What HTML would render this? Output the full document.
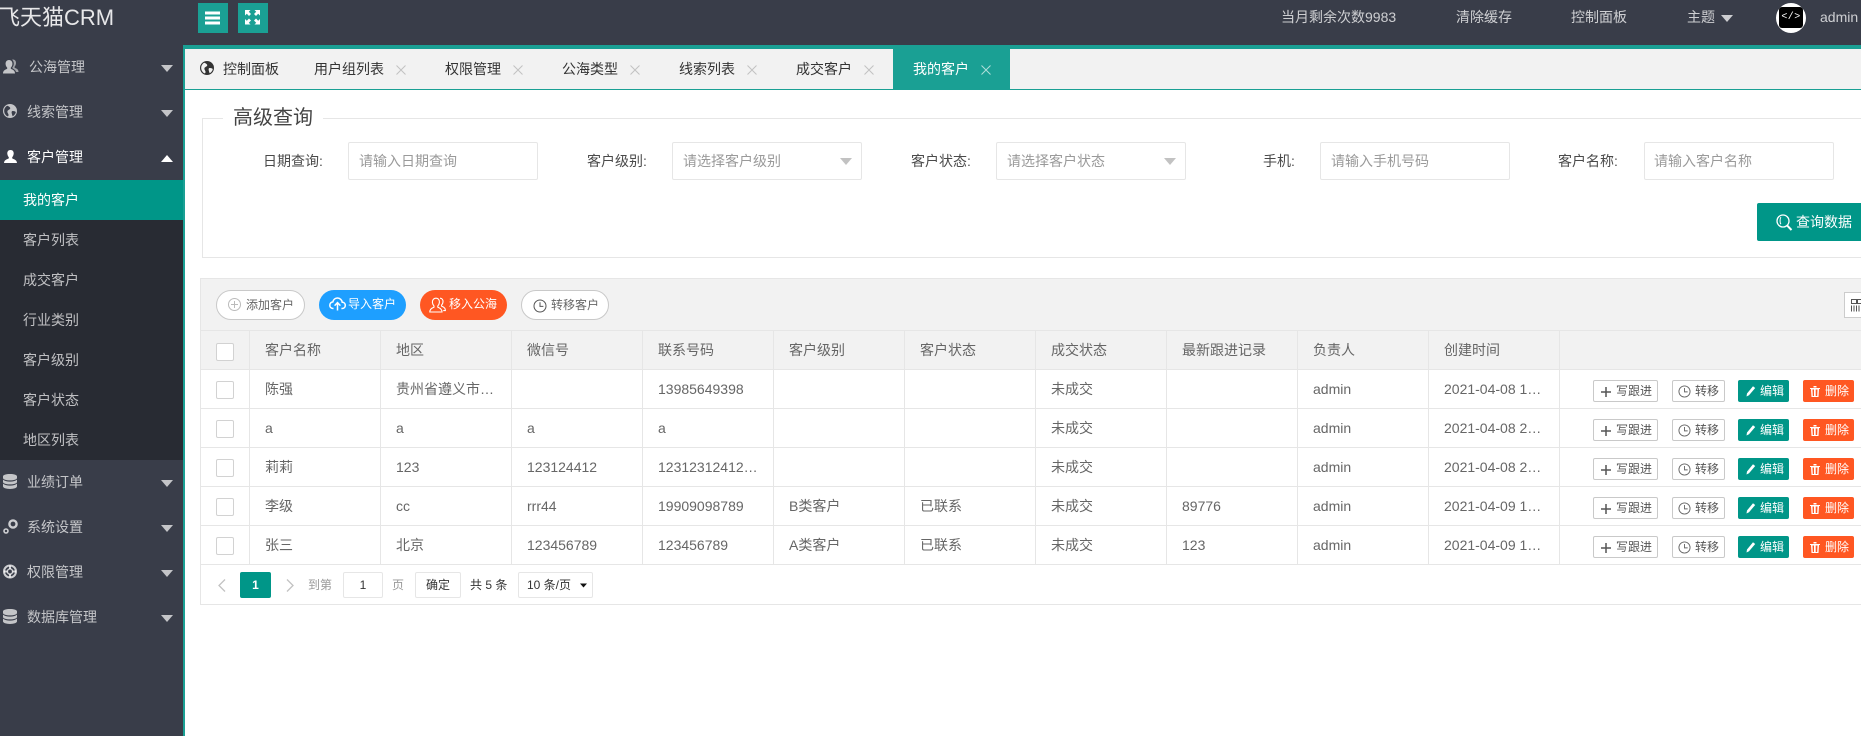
<!DOCTYPE html>
<html lang="zh-CN">
<head>
<meta charset="utf-8">
<title>飞天猫CRM</title>
<style>
*{box-sizing:border-box}
html,body{margin:0;padding:0;width:1861px;height:736px;overflow:hidden;background:#fff}
body{position:relative;font-family:"Liberation Sans","Noto Sans CJK SC",sans-serif;font-size:14px;color:#666}
.a{position:absolute}
.t{position:absolute;white-space:nowrap;line-height:20px;height:20px}
svg{position:absolute;display:block;overflow:visible}
.s{color:rgba(255,255,255,.7)}
.c{color:rgba(255,255,255,.75)}
.tb{color:#333}
.lb{color:#4a4a4a}
.ph{color:#9a9a9a}
.in{position:absolute;top:142px;width:190px;height:38px;border:1px solid #e6e6e6;border-radius:2px;background:#fff}
.pill{position:absolute;top:290px;height:30px;border-radius:15px;font-size:12px;line-height:28px}
table{position:absolute;left:200px;top:331px;border-collapse:separate;border-spacing:0;table-layout:fixed;width:1661px}
td{height:39px;padding:0 15px;border-right:1px solid #e6e6e6;border-bottom:1px solid #e6e6e6;white-space:nowrap;overflow:hidden;position:relative;font-size:14px;color:#666;line-height:20px}
td:first-child{border-left:1px solid #e6e6e6}
td:last-child{border-right:0}
thead td{background:#f2f2f2}
.cb{position:absolute;left:15px;top:11px;width:18px;height:18px;border:1px solid #d2d2d2;border-radius:2px;background:#fff}
.b{position:absolute;top:10px;height:22px;font-size:12px;line-height:20px;border-radius:2px;white-space:nowrap}
.b span{position:absolute;top:0}
.b svg{top:0;left:0}
.w{background:#fff;border:1px solid #c9c9c9;color:#555}
.g{background:#009688;color:#fff;line-height:22px}
.r{background:#ff5722;color:#fff;line-height:22px}
.pg{position:absolute;top:572px;height:26px;border:1px solid #e6e6e6;border-radius:2px;background:#fff;font-size:12px;line-height:24px;color:#333}
</style>
</head>
<body>
<svg width="0" height="0" style="position:absolute">
<defs>
<symbol id="clock" viewBox="0 0 14 14"><circle cx="7" cy="7" r="6" fill="none" stroke="currentColor" stroke-width="1"/><path d="M7 3.2V7.4H10.4" fill="none" stroke="currentColor" stroke-width="1"/></symbol>
<symbol id="plus" viewBox="0 0 10 10"><path d="M5 0V10M0 5H10" stroke="currentColor" stroke-width="1.5" fill="none"/></symbol>
<symbol id="pen" viewBox="0 0 10 12"><path d="M0.5 11.5L1 8.5 7 1.2 9.2 3 3 10.2Z" fill="#fff"/></symbol>
<symbol id="trash" viewBox="0 0 10 11"><path d="M0 2H10V3H9L8.5 11H1.5L1 3H0ZM3.5 0H6.5V1.5H3.5ZM2.5 3.5L2.8 10H4V3.5ZM5.7 3.5V10H7.2L7.5 3.5Z" fill="#fff" fill-rule="evenodd"/></symbol>
<symbol id="x" viewBox="0 0 10 10"><path d="M0.5 0.5L9.5 9.5M9.5 0.5L0.5 9.5" stroke="currentColor" stroke-width="1" fill="none"/></symbol>
<symbol id="db" viewBox="0 0 14 15"><path d="M7 0C10.9 0 14 1 14 2.4V4C14 5.4 10.9 6.4 7 6.4S0 5.4 0 4V2.4C0 1 3.1 0 7 0ZM0 5.6C1.5 6.9 4 7.6 7 7.6S12.5 6.9 14 5.6V8C14 9.4 10.9 10.4 7 10.4S0 9.4 0 8ZM0 9.6C1.5 10.9 4 11.6 7 11.6S12.5 10.9 14 9.6V12.4C14 13.9 10.9 15 7 15S0 13.9 0 12.4Z" fill="currentColor"/></symbol>
<symbol id="dn" viewBox="0 0 12 7"><path d="M0 0H12L6 7Z" fill="currentColor"/></symbol>
<symbol id="globe" viewBox="0 0 14 14"><path fill-rule="evenodd" d="M7 0A7 7 0 1 1 7 14 7 7 0 1 1 7 0ZM4.2 1.8C2.4 2.8 1.2 4.7 1.2 7S2.6 11.4 4.6 12.4C5.4 12 5.8 11.2 5.4 10.2 5 9.2 4.2 8.4 4.4 7.2 4.6 6 6.6 5.8 7.2 4.6 7.6 3.6 6 2.4 4.2 1.8ZM9 7.2C8.4 7.8 8.6 9 9 10.2 9.2 11 9.4 11.8 9.8 12.2 11.4 11.2 12.6 9.6 12.8 8 12 7.2 10 6.6 9 7.2Z" fill="currentColor"/></symbol>
</defs>
</svg>

<!-- header -->
<div class="a" style="left:0;top:0;width:1861px;height:45px;background:#393d49"></div>
<div class="a" style="left:0;top:45px;width:183px;height:691px;background:#393d49"></div>
<div class="a" style="left:183px;top:45px;width:2px;height:691px;background:#1aa094"></div>
<div class="a" style="left:183px;top:45px;width:1678px;height:4px;background:#1aa094"></div>
<div class="t" style="left:-2px;top:6px;height:24px;line-height:24px;font-size:22px;color:rgba(255,255,255,.88)">飞天猫CRM</div>

<div class="a" style="left:198px;top:3px;width:30px;height:30px;background:#1aa094"></div>
<svg style="left:205px;top:11px" width="16" height="14"><path d="M0 0.5H15V3.5H0ZM0 5.5H15V8.5H0ZM0 10.5H15V13.5H0Z" fill="#fff"/></svg>
<div class="a" style="left:238px;top:3px;width:30px;height:30px;background:#1aa094"></div>
<svg style="left:245px;top:10px" width="16" height="15"><path d="M0 0H5.5L3.8 1.8 6 4 4 6 1.8 3.8 0 5.5ZM15 0V5.5L13.2 3.8 11 6 9 4 11.2 1.8 9.5 0ZM0 14.5V9L1.8 10.7 4 8.5 6 10.5 3.8 12.7 5.5 14.5ZM15 14.5H9.5L11.2 12.7 9 10.5 11 8.5 13.2 10.7 15 9Z" fill="#fff"/></svg>

<div class="t c" style="left:1281px;top:7px">当月剩余次数9983</div>
<div class="t c" style="left:1456px;top:7px">清除缓存</div>
<div class="t c" style="left:1571px;top:7px">控制面板</div>
<div class="t c" style="left:1687px;top:7px">主题</div>
<svg style="left:1721px;top:15px;color:rgba(255,255,255,.75)" width="12" height="7"><use href="#dn"/></svg>
<div class="a" style="left:1776px;top:3px;width:30px;height:30px;border-radius:50%;background:#fff"></div>
<div class="a" style="left:1779px;top:7px;width:24px;height:21px;background:#000;border-radius:3px;color:#fff;font:10px/21px 'Liberation Mono',monospace;text-align:center;letter-spacing:.4px">&lt;/&gt;</div>
<div class="t c" style="left:1820px;top:7px">admin</div>

<!-- sidebar -->
<svg style="left:3px;top:59px;color:rgba(255,255,255,.7)" width="16" height="15"><path d="M6 1C8.4 1 9.6 3 9.4 5.2 9.2 7 8.4 8 7.8 8.6V9.8C9 10.6 12 11 12 14.5H0C0 11 3 10.6 4.2 9.8V8.6C3.6 8 2.8 7 2.6 5.2 2.4 3 3.6 1 6 1Z" fill="currentColor"/><path d="M10 0.5C12.2 0.5 13.2 2.4 13 4.4 12.8 6 12.2 7 11.6 7.6V8.8C12.6 9.4 15.5 9.8 15.5 13H13C12.6 10.8 10.6 10 9.4 9.2V8.4C10.4 7.2 10.8 6 10.8 4.6 10.8 3 10.2 1.5 9 .8Z" fill="currentColor" opacity=".75"/></svg>
<div class="t s" style="left:29px;top:57px">公海管理</div>
<svg style="left:161px;top:65px;color:rgba(255,255,255,.7)" width="12" height="7"><use href="#dn"/></svg>

<svg style="left:3px;top:104px;color:rgba(255,255,255,.7)" width="14" height="14"><use href="#globe"/></svg>
<div class="t s" style="left:27px;top:102px">线索管理</div>
<svg style="left:161px;top:110px;color:rgba(255,255,255,.7)" width="12" height="7"><use href="#dn"/></svg>

<svg style="left:4px;top:150px" width="13" height="13"><path d="M6.5 0C8.8 0 9.9 1.8 9.7 3.8 9.5 5.5 8.8 6.6 8.2 7.2V8.4C9.4 9.2 12.8 9.6 13 13H0C.2 9.6 3.6 9.2 4.8 8.4V7.2C4.2 6.6 3.5 5.5 3.3 3.8 3.1 1.8 4.2 0 6.5 0Z" fill="#fff"/></svg>
<div class="t" style="left:27px;top:147px;color:#fff">客户管理</div>
<svg style="left:161px;top:155px" width="12" height="7"><path d="M0 7H12L6 0Z" fill="#fff"/></svg>

<div class="a" style="left:0;top:180px;width:183px;height:40px;background:#009688"></div>
<div class="a" style="left:0;top:220px;width:183px;height:240px;background:#282b33"></div>
<div class="t" style="left:23px;top:190px;color:#fff">我的客户</div>
<div class="t s" style="left:23px;top:230px">客户列表</div>
<div class="t s" style="left:23px;top:270px">成交客户</div>
<div class="t s" style="left:23px;top:310px">行业类别</div>
<div class="t s" style="left:23px;top:350px">客户级别</div>
<div class="t s" style="left:23px;top:390px">客户状态</div>
<div class="t s" style="left:23px;top:430px">地区列表</div>

<svg style="left:3px;top:474px;color:rgba(255,255,255,.7)" width="14" height="15"><use href="#db"/></svg>
<div class="t s" style="left:27px;top:472px">业绩订单</div>
<svg style="left:161px;top:480px;color:rgba(255,255,255,.7)" width="12" height="7"><use href="#dn"/></svg>

<svg style="left:3px;top:519px" width="15" height="15"><circle cx="10" cy="5" r="3.6" fill="none" stroke="rgba(255,255,255,.75)" stroke-width="2.4"/><circle cx="3" cy="12" r="2" fill="none" stroke="rgba(255,255,255,.75)" stroke-width="1.6"/></svg>
<div class="t s" style="left:27px;top:517px">系统设置</div>
<svg style="left:161px;top:525px;color:rgba(255,255,255,.7)" width="12" height="7"><use href="#dn"/></svg>

<svg style="left:3px;top:564px" width="14" height="15"><circle cx="7" cy="7.5" r="6" fill="none" stroke="rgba(255,255,255,.75)" stroke-width="2"/><circle cx="7" cy="7.5" r="2.6" fill="none" stroke="rgba(255,255,255,.75)" stroke-width="1.4"/><path d="M7 1.5V5M7 10V13.5M1 7.5H4.5M9.5 7.5H13" stroke="rgba(255,255,255,.75)" stroke-width="2" fill="none"/></svg>
<div class="t s" style="left:27px;top:562px">权限管理</div>
<svg style="left:161px;top:570px;color:rgba(255,255,255,.7)" width="12" height="7"><use href="#dn"/></svg>

<svg style="left:3px;top:609px;color:rgba(255,255,255,.7)" width="14" height="15"><use href="#db"/></svg>
<div class="t s" style="left:27px;top:607px">数据库管理</div>
<svg style="left:161px;top:615px;color:rgba(255,255,255,.7)" width="12" height="7"><use href="#dn"/></svg>

<!-- tabs -->
<div class="a" style="left:185px;top:49px;width:1676px;height:40px;background:#f2f2f2"></div>
<div class="a" style="left:185px;top:89px;width:1676px;height:1px;background:#1aa094"></div>
<svg style="left:200px;top:61px;color:#333" width="14" height="14"><use href="#globe"/></svg>
<div class="t tb" style="left:223px;top:59px">控制面板</div>
<div class="t tb" style="left:314px;top:59px">用户组列表</div>
<svg style="left:396px;top:65px;color:#c2c2c2" width="10" height="10"><use href="#x"/></svg>
<div class="t tb" style="left:445px;top:59px">权限管理</div>
<svg style="left:513px;top:65px;color:#c2c2c2" width="10" height="10"><use href="#x"/></svg>
<div class="t tb" style="left:562px;top:59px">公海类型</div>
<svg style="left:630px;top:65px;color:#c2c2c2" width="10" height="10"><use href="#x"/></svg>
<div class="t tb" style="left:679px;top:59px">线索列表</div>
<svg style="left:747px;top:65px;color:#c2c2c2" width="10" height="10"><use href="#x"/></svg>
<div class="t tb" style="left:796px;top:59px">成交客户</div>
<svg style="left:864px;top:65px;color:#c2c2c2" width="10" height="10"><use href="#x"/></svg>
<div class="a" style="left:893px;top:49px;width:117px;height:41px;background:#1aa094"></div>
<div class="t" style="left:913px;top:59px;color:#fff">我的客户</div>
<svg style="left:981px;top:65px;color:rgba(255,255,255,.65)" width="10" height="10"><use href="#x"/></svg>

<!-- search fieldset -->
<div class="a" style="left:202px;top:118px;width:1680px;height:140px;border:1px solid #e6e6e6"></div>
<div class="a" style="left:223px;top:104px;width:100px;height:28px;background:#fff"></div>
<div class="t" style="left:233px;top:104px;height:28px;line-height:28px;font-size:20px;color:#444">高级查询</div>

<div class="t lb" style="left:263px;top:151px">日期查询:</div>
<div class="in" style="left:348px"></div>
<div class="t ph" style="left:359px;top:151px">请输入日期查询</div>

<div class="t lb" style="left:587px;top:151px">客户级别:</div>
<div class="in" style="left:672px"></div>
<div class="t ph" style="left:683px;top:151px">请选择客户级别</div>
<svg style="left:840px;top:158px;color:#c2c2c2" width="12" height="7"><use href="#dn"/></svg>

<div class="t lb" style="left:911px;top:151px">客户状态:</div>
<div class="in" style="left:996px"></div>
<div class="t ph" style="left:1007px;top:151px">请选择客户状态</div>
<svg style="left:1164px;top:158px;color:#c2c2c2" width="12" height="7"><use href="#dn"/></svg>

<div class="t lb" style="left:1263px;top:151px">手机:</div>
<div class="in" style="left:1320px"></div>
<div class="t ph" style="left:1331px;top:151px">请输入手机号码</div>

<div class="t lb" style="left:1558px;top:151px">客户名称:</div>
<div class="in" style="left:1644px"></div>
<div class="t ph" style="left:1654px;top:151px">请输入客户名称</div>

<div class="a" style="left:1757px;top:203px;width:110px;height:38px;background:#009688;border-radius:2px"></div>
<svg style="left:1776px;top:214px" width="17" height="17"><circle cx="7" cy="7" r="6" fill="none" stroke="#fff" stroke-width="1.3"/><path d="M5 3.2C3.8 4.4 3.8 9 5 10.2" fill="none" stroke="#fff" stroke-width="1"/><path d="M11.2 11.6L15.5 16" stroke="#fff" stroke-width="2"/></svg>
<div class="t" style="left:1796px;top:212px;color:#fff">查询数据</div>

<!-- toolbar -->
<div class="a" style="left:200px;top:278px;width:1680px;height:53px;background:#f2f2f2;border:1px solid #e6e6e6"></div>

<div class="pill" style="left:216px;width:89px;background:#fff;border:1px solid #c9c9c9;color:#666"></div>
<svg style="left:228px;top:298px" width="13" height="13"><circle cx="6.5" cy="6.5" r="6" fill="none" stroke="#bbb"/><path d="M6.5 3V10M3 6.5H10" stroke="#bbb" fill="none"/></svg>
<div class="t" style="left:246px;top:295px;font-size:12px;color:#666">添加客户</div>

<div class="pill" style="left:319px;width:87px;background:#1e9fff"></div>
<svg style="left:329px;top:297px" width="17" height="14"><path d="M4.5 11.5H4C2 11.5 .8 10 .8 8.2S2.2 5 3.8 5C4.4 2.6 6.2 1 8.4 1 11 1 13 3 13.2 5.2 15 5.2 16.3 6.6 16.3 8.4S15 11.5 13 11.5H12.4" fill="none" stroke="#fff" stroke-width="1.5"/><path d="M8.5 13.5V6M5.6 8.6L8.5 5.6 11.4 8.6" fill="none" stroke="#fff" stroke-width="1.5"/></svg>
<div class="t" style="left:348px;top:294px;font-size:12px;color:#fff">导入客户</div>

<div class="pill" style="left:420px;width:87px;background:#ff5722"></div>
<svg style="left:429px;top:297px" width="17" height="16"><path d="M7 1.2C9.4 1.2 10.6 3.2 10.4 5.4 10.2 7.2 9.4 8.4 8.8 9V10.2C10 11 13 11.4 13 15H.8C.8 11.4 3.8 11 5 10.2V9C4.4 8.4 3.6 7.2 3.4 5.4 3.2 3.2 4.6 1.2 7 1.2Z" fill="none" stroke="#fff" stroke-width="1.1"/><path d="M11 1.2C13.2 1.2 14.2 3 14 5 13.8 6.6 13.2 7.4 12.6 8V9.2C13.6 9.8 16.4 10 16.4 13.6H14.2" fill="none" stroke="#fff" stroke-width="1.1"/></svg>
<div class="t" style="left:449px;top:294px;font-size:12px;color:#fff">移入公海</div>

<div class="pill" style="left:521px;width:88px;background:#fff;border:1px solid #c9c9c9"></div>
<svg style="left:533px;top:299px;color:#555" width="14" height="14"><use href="#clock"/></svg>
<div class="t" style="left:551px;top:295px;font-size:12px;color:#666">转移客户</div>

<div class="a" style="left:1844px;top:292px;width:30px;height:26px;border:1px solid #ccc;background:#fff"></div>
<svg style="left:1851px;top:299px" width="10" height="13"><path d="M.5 .5H5.5V4.5H.5ZM6.5 .5H12V4.5H6.5ZM.5 6.5V12.5M3 6.5V12.5M5.5 6.5V12.5M8 6.5V12.5" fill="none" stroke="#555" stroke-width="1"/></svg>

<!-- table -->
<table>
<colgroup><col style="width:50px"><col style="width:131px"><col style="width:131px"><col style="width:131px"><col style="width:131px"><col style="width:131px"><col style="width:131px"><col style="width:131px"><col style="width:131px"><col style="width:131px"><col style="width:131px"><col style="width:301px"></colgroup>
<thead><tr style="height:39px"><td><div class="cb" style="top:12px"></div></td><td>客户名称</td><td>地区</td><td>微信号</td><td>联系号码</td><td>客户级别</td><td>客户状态</td><td>成交状态</td><td>最新跟进记录</td><td>负责人</td><td>创建时间</td><td></td></tr></thead>
<tbody>
<tr><td><div class="cb"></div></td><td>陈强</td><td>贵州省遵义市…</td><td></td><td>13985649398</td><td></td><td></td><td>未成交</td><td></td><td>admin</td><td>2021-04-08 1…</td>
<td><div class="b w" style="left:33px;width:65px"><svg style="left:7px;top:6px;color:#555" width="10" height="10"><use href="#plus"/></svg><span style="left:22px">写跟进</span></div><div class="b w" style="left:112px;width:53px"><svg style="left:5px;top:4px;color:#666" width="13" height="13"><use href="#clock"/></svg><span style="left:22px">转移</span></div><div class="b g" style="left:178px;width:51px"><svg style="left:8px;top:5px" width="10" height="12"><use href="#pen"/></svg><span style="left:22px">编辑</span></div><div class="b r" style="left:243px;width:51px"><svg style="left:7px;top:6px" width="10" height="11"><use href="#trash"/></svg><span style="left:22px">删除</span></div></td></tr>
<tr><td><div class="cb"></div></td><td>a</td><td>a</td><td>a</td><td>a</td><td></td><td></td><td>未成交</td><td></td><td>admin</td><td>2021-04-08 2…</td>
<td><div class="b w" style="left:33px;width:65px"><svg style="left:7px;top:6px;color:#555" width="10" height="10"><use href="#plus"/></svg><span style="left:22px">写跟进</span></div><div class="b w" style="left:112px;width:53px"><svg style="left:5px;top:4px;color:#666" width="13" height="13"><use href="#clock"/></svg><span style="left:22px">转移</span></div><div class="b g" style="left:178px;width:51px"><svg style="left:8px;top:5px" width="10" height="12"><use href="#pen"/></svg><span style="left:22px">编辑</span></div><div class="b r" style="left:243px;width:51px"><svg style="left:7px;top:6px" width="10" height="11"><use href="#trash"/></svg><span style="left:22px">删除</span></div></td></tr>
<tr><td><div class="cb"></div></td><td>莉莉</td><td>123</td><td>123124412</td><td>12312312412…</td><td></td><td></td><td>未成交</td><td></td><td>admin</td><td>2021-04-08 2…</td>
<td><div class="b w" style="left:33px;width:65px"><svg style="left:7px;top:6px;color:#555" width="10" height="10"><use href="#plus"/></svg><span style="left:22px">写跟进</span></div><div class="b w" style="left:112px;width:53px"><svg style="left:5px;top:4px;color:#666" width="13" height="13"><use href="#clock"/></svg><span style="left:22px">转移</span></div><div class="b g" style="left:178px;width:51px"><svg style="left:8px;top:5px" width="10" height="12"><use href="#pen"/></svg><span style="left:22px">编辑</span></div><div class="b r" style="left:243px;width:51px"><svg style="left:7px;top:6px" width="10" height="11"><use href="#trash"/></svg><span style="left:22px">删除</span></div></td></tr>
<tr><td><div class="cb"></div></td><td>李级</td><td>cc</td><td>rrr44</td><td>19909098789</td><td>B类客户</td><td>已联系</td><td>未成交</td><td>89776</td><td>admin</td><td>2021-04-09 1…</td>
<td><div class="b w" style="left:33px;width:65px"><svg style="left:7px;top:6px;color:#555" width="10" height="10"><use href="#plus"/></svg><span style="left:22px">写跟进</span></div><div class="b w" style="left:112px;width:53px"><svg style="left:5px;top:4px;color:#666" width="13" height="13"><use href="#clock"/></svg><span style="left:22px">转移</span></div><div class="b g" style="left:178px;width:51px"><svg style="left:8px;top:5px" width="10" height="12"><use href="#pen"/></svg><span style="left:22px">编辑</span></div><div class="b r" style="left:243px;width:51px"><svg style="left:7px;top:6px" width="10" height="11"><use href="#trash"/></svg><span style="left:22px">删除</span></div></td></tr>
<tr><td><div class="cb"></div></td><td>张三</td><td>北京</td><td>123456789</td><td>123456789</td><td>A类客户</td><td>已联系</td><td>未成交</td><td>123</td><td>admin</td><td>2021-04-09 1…</td>
<td><div class="b w" style="left:33px;width:65px"><svg style="left:7px;top:6px;color:#555" width="10" height="10"><use href="#plus"/></svg><span style="left:22px">写跟进</span></div><div class="b w" style="left:112px;width:53px"><svg style="left:5px;top:4px;color:#666" width="13" height="13"><use href="#clock"/></svg><span style="left:22px">转移</span></div><div class="b g" style="left:178px;width:51px"><svg style="left:8px;top:5px" width="10" height="12"><use href="#pen"/></svg><span style="left:22px">编辑</span></div><div class="b r" style="left:243px;width:51px"><svg style="left:7px;top:6px" width="10" height="11"><use href="#trash"/></svg><span style="left:22px">删除</span></div></td></tr>
</tbody>
</table>

<!-- pager -->
<div class="a" style="left:200px;top:565px;width:1680px;height:40px;border:1px solid #e6e6e6;border-top:0"></div>
<svg style="left:218px;top:579px" width="8" height="13"><path d="M7 .5L1 6.5 7 12.5" fill="none" stroke="#c2c2c2" stroke-width="1.3"/></svg>
<div class="a" style="left:240px;top:572px;width:31px;height:26px;background:#009688;border-radius:2px;color:#fff;font-size:12px;font-weight:bold;line-height:26px;text-align:center">1</div>
<svg style="left:286px;top:579px" width="8" height="13"><path d="M1 .5L7 6.5 1 12.5" fill="none" stroke="#c2c2c2" stroke-width="1.3"/></svg>
<div class="t" style="left:308px;top:575px;font-size:12px;color:#999">到第</div>
<div class="pg" style="left:343px;width:40px;text-align:center">1</div>
<div class="t" style="left:392px;top:575px;font-size:12px;color:#999">页</div>
<div class="pg" style="left:415px;width:46px;text-align:center">确定</div>
<div class="t" style="left:470px;top:575px;font-size:12px;color:#333">共 5 条</div>
<div class="pg" style="left:518px;width:75px;padding-left:8px">10 条/页</div>
<svg style="left:580px;top:582px;color:#111" width="7" height="7"><use href="#dn"/></svg>
</body>
</html>
